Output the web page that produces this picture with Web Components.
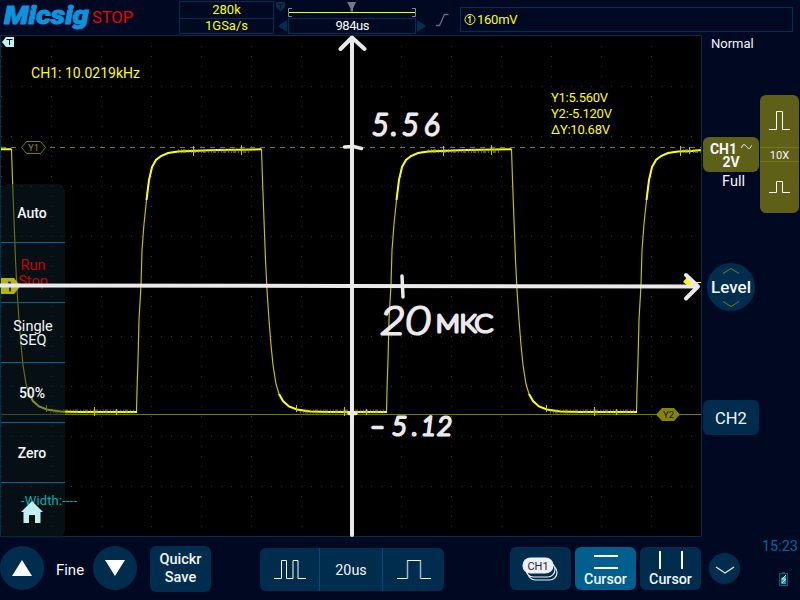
<!DOCTYPE html>
<html lang="en">
<head>
<meta charset="utf-8">
<title>Micsig oscilloscope</title>
<style>
html,body{margin:0;width:800px;height:600px;overflow:hidden;background:#000822}
body{font-family:Roboto,"Liberation Sans",sans-serif;color:#f4f7fa}
</style>
</head>
<body>
<scope-app></scope-app>
<script>
function define(name, html){
  const t=document.createElement('template'); t.innerHTML=html;
  customElements.define(name, class extends HTMLElement{
    constructor(){super();this.attachShadow({mode:'open'}).append(t.content.cloneNode(true));}
  });
}

define('scope-header', `<style>
:host{display:grid;grid-template-columns:179px 95px 184px 1fr;height:36px;box-sizing:border-box}
*{box-sizing:border-box}
.brand svg,.timeline svg{display:block}
.acq{border:1px solid #003050;margin-top:1px;height:33px;color:#ff0;font-size:13px;text-align:center;display:grid;grid-template-rows:16px 15px;line-height:16px}
.acq span+span{border-top:1px solid #003050;line-height:14px}
.trig{margin:7px 7px 0 2px;height:25px;border:1px solid #003050;color:#ff0;font-size:13px;display:flex;align-items:center;padding-left:3px;gap:1px}
.trig span{letter-spacing:-.25px}
</style>
<div class="brand"><svg width="179" height="35">
<text x="4" y="23.500" font-family="Roboto" font-weight="900" font-style="italic" font-size="25" fill="#0a93df" stroke="#0a93df" stroke-width=".9" textLength="85" lengthAdjust="spacingAndGlyphs">Micsig</text>
<text x="92" y="23" font-size="16.500" fill="#f00000" textLength="41" lengthAdjust="spacingAndGlyphs">STOP</text></svg></div>
<div class="acq"><span>280k</span><span>1GSa/s</span></div>
<div class="timeline"><svg width="184" height="35">
<path d="M2 2h9v5l-4.500 4.500L2 7z" fill="#00304f"/><path d="M4 4.500h5M6.500 4.500v4" stroke="#000822" fill="none"/>
<path d="M14.500 12.500H141" stroke="#ff0" stroke-width="1.200"/>
<path d="M18 8.500h-3.500v8H18M138 8.500h3.500v8H138" stroke="#858796" fill="none"/>
<path d="M73 2h9l-3 6.500v3h-2.500v-3z" fill="#747889"/>
<rect x="14.500" y="18.500" width="127" height="15" fill="none" stroke="#003050"/>
<path d="M13 20v12l-9-6zM143 20v12l9-6z" fill="#00304f"/>
<text x="78.500" y="30" font-size="13" fill="#fff" text-anchor="middle" textLength="34">984us</text>
<path d="M162 25.500h3.500l5-11h4" stroke="#666b7c" stroke-width="1.300" fill="none"/>
</svg></div>
<div class="trig"><svg width="12" height="14"><circle cx="6" cy="6.500" r="5" fill="none" stroke="#ff0"/><path d="M4 5l2-1.500v6.500" fill="none" stroke="#ff0" stroke-width="1.200"/></svg><span>160mV</span></div>`);

define('scope-trace', `<style>:host{display:block}svg{display:block}</style>
<svg width="702" height="502" viewBox="0 35 702 502">
<defs><pattern id="dots" x="1" y="36" width="50" height="50" patternUnits="userSpaceOnUse">
<path d="M0 0h1v1H0zM10 0h1v1h-1zM20 0h1v1h-1zM30 0h1v1h-1zM40 0h1v1h-1zM0 10h1v1H0zM0 20h1v1H0zM0 30h1v1H0zM0 40h1v1H0z" fill="#393939" shape-rendering="crispEdges"/></pattern></defs>
<rect y="35" width="702" height="502" fill="#000"/>
<rect x="1" y="37" width="700" height="499" fill="url(#dots)"/>
<path d="M0 35.500H701.500V536.500H.5V36" fill="none" stroke="#00304a"/>
<path d="M1 147.500H20M50 147.500H701" stroke="#7b7b12" stroke-dasharray="5 5"/>
<path d="M1 414.500H701" stroke="#7b7b00"/>
<g id="wave" fill="none" stroke="#e9e900"></g>
<path d="M21.500 147.500l5-6h14l5 6-5 6h-14z" fill="#000" stroke="#7b7b00"/>
<text x="33.500" y="151" font-size="9.500" fill="#8b8b18" text-anchor="middle">Y1</text>
<path d="M656 414.500l6-6.500h12l6 6.500-6 6.500h-12z" fill="#858500"/>
<text x="668.500" y="418" font-size="9.500" fill="#111" text-anchor="middle">Y2</text>
<path d="M2 42l4-5h8v10H6z" fill="#bff0f3"/><path d="M6.500 39.500h6M9.500 39.500v5.500" stroke="#000" fill="none"/>
<g fill="#ff0"><text x="31" y="78" font-size="14" textLength="109">CH1: 10.0219kHz</text>
<g font-size="13"><text x="551" y="102" textLength="57">Y1:5.560V</text><text x="551" y="118" textLength="61">Y2:-5.120V</text><text x="551" y="134" textLength="59">ΔY:10.68V</text></g></g>
</svg>`);

const fall=[[11.500,149],[12.500,180],[14,220],[15.500,260],[17,290],[19,320],[21,345],[23,365],[26,384],[29,394],[33,401],[39,406.500],[47,409.500],[60,411.500]];
const rise=[[136.500,412],[137,390],[138,360],[139,320],[141,285],[142,250],[144,224],[146.500,200],[149,180],[152,167],[156,160],[161,156],[168,153],[178,151.500],[192,151]];
/* One cycle of the square wave, repeated along the time axis. */
function drawWave(g){
  let thin='',thick='';
  for(const o of [0,250,500]){
    const f=fall.map(p=>(p[0]+o)+' '+p[1]), r=rise.map(p=>(p[0]+o)+' '+p[1]);
    thin+='M'+f.join('L')+'M'+r.join('L');
    const end=Math.min(262+o,701);
    thick+='M'+f.slice(9).join('L')+'L'+(78+o)+' 412H'+(137+o)+'M'+r.slice(7).join('L');
    thick+=end===701?'L701 150':'L'+(215+o)+' 150L'+(end-.5)+' 149.3';
  }
  const noise=[0,250,500].map(o=>'M'+(50+o)+' 411.5H'+(135+o)+(o<500?'M'+(178+o)+' 151H'+(250+o):'M680 151H701')).join('');
  const ticks=[0,250,500].map(o=>'M'+(46.5+o)+' 405v7M'+(94.5+o)+' 407v9M'+(116.5+o)+' 409v6'+(o<500?'M'+(193.5+o)+' 146v10M'+(241.5+o)+' 145v10':'')).join('');
  g.innerHTML='<path stroke="#c6c600" stroke-width="1.15" d="'+thin+'"/><path stroke="#ff0" stroke-width="2" d="M1 149.3H11.500'+thick+'"/><path stroke="#b8b800" stroke-width="4" stroke-dasharray="1 2 1 1 3 2" opacity=".5" d="'+noise+'"/><path stroke="#c8c800" d="'+ticks+'M680.500 146v10M689.500 147v7"/>';
}

define('menu-item', `<style>:host{display:flex;box-sizing:border-box;height:60px;align-items:center;justify-content:center;text-align:center;font-size:14px;line-height:14px;color:#f4f7fa;border-bottom:1px solid #00679a;font-weight:500;padding-right:2px}
:host([last]){border:0;height:56px}:host([run]){color:#c50000;line-height:16px;padding-top:2px}:host([light]){padding-top:2px}:host([run]),:host([light]){font-weight:400;font-size:14.500px;padding-right:0}</style><div><slot></slot></div>`);
define('scope-menu', `<style>:host{display:block;width:64px;height:354px;background:#091d2780;border-radius:8px;box-sizing:border-box}menu-item:first-of-type{height:59px}</style>
<menu-item>Auto</menu-item><menu-item run>Run<br>Stop</menu-item><menu-item light>Single<br>SEQ</menu-item><menu-item>50%</menu-item><menu-item>Zero</menu-item><menu-item last></menu-item>`);

define('scope-annotations', `<style>:host{display:block;pointer-events:none}svg{display:block}.hand{font-family:Lato,"DejaVu Sans",sans-serif;font-weight:100;fill:#ebe9ec;stroke:#ebe9ec;stroke-width:3.200;stroke-linejoin:round;stroke-linecap:round}</style>
<svg width="702" height="502" viewBox="0 35 702 502">
<text x="21" y="505" font-size="13" fill="#00b0b4" textLength="56">-Width:----</text>
<path d="M32 501l11 11h-2.500v11h-5.500v-8h-6v8h-5.500v-11H21z" fill="#bff0f3"/>
<path d="M1 278h13l6.500 8-6.500 8H1z" fill="#b5b510"/><path d="M8 282.500h2v9" stroke="#000" stroke-width="1.500" fill="none"/>
<path d="M683 282l5-6 4 3 2 3h7v1h-7l-3 5z" fill="#ff0"/>
<g fill="none" stroke="#ebe9ec" stroke-linecap="round" stroke-linejoin="round">
<path d="M352 38V535" stroke-width="4"/><path d="M340.500 49L352 37.500l12.500 11.500" stroke-width="4"/>
<path d="M0 285.500L350 286L697 286.500" stroke-width="4"/><path d="M686 275l12 11.500-12 12" stroke-width="4"/>
<path d="M344.500 147l9-.5 8 2M349 413.500h7M402 276l1 21" stroke-width="3.500"/></g>
<text class="hand" font-size="29" y="135" x="372 391 402 424" font-style="italic">5.56</text>
<text class="hand" y="334" font-size="37" x="380" font-style="italic" textLength="51" lengthAdjust="spacingAndGlyphs">20</text>
<text class="hand" y="332" font-size="23" x="436" textLength="57" lengthAdjust="spacingAndGlyphs">МКС</text>
<text class="hand" y="435" font-size="26" x="370 392 412 421 437" font-style="italic">–5.12</text>
</svg>`);

define('scope-screen', `<style>:host{display:block;position:relative;width:702px;height:502px}scope-menu{position:absolute;left:1px;top:149px}scope-annotations{position:absolute;left:0;top:0}</style>
<scope-trace></scope-trace><scope-menu></scope-menu><scope-annotations></scope-annotations>`);

define('scope-side', `<style>
:host{display:grid;grid-template-columns:57px 39px;column-gap:1px;font-size:14px;padding-left:0}
.left{display:flex;flex-direction:column;align-items:center}
.mode{font-size:13px;line-height:16px;margin-top:1px;height:101px;align-self:flex-start;padding-left:9px}
.ch{width:56px;height:35px;border-radius:6px;background:#5e6018;display:flex;flex-direction:column;align-items:center;justify-content:center;font-weight:700;line-height:13px;padding-top:3px;margin-left:1px;box-sizing:border-box}
.ch div{display:flex;gap:4px}.ch svg{margin-top:-1px}
.full{font-size:14.500px;line-height:18px;padding:1px 0 0 6px}
.level{margin-top:72px;width:48px;height:48px;border-radius:50%;background:#002d4e;display:flex;flex-direction:column;align-items:center;justify-content:space-between;padding:5px 0 4px;box-sizing:border-box;font-size:17px;font-weight:500;line-height:22px}
.level{margin-left:1px}.level span{margin-top:-1px}
.level svg{display:block}.ch2{margin:89px 0 0 1px;padding-top:2px;box-sizing:border-box;width:56px;height:35px;border-radius:6px;background:#002d4e;display:flex;align-items:center;justify-content:center;font-size:16.500px}
.scale{margin-top:60px;width:39px;height:118px;background:#5e6018;border-radius:6px;display:grid;grid-template-rows:52px 15px 51px;text-align:center;font-size:11px;line-height:15px}
.scale span{border:solid #747812;border-width:1px 0}.scale svg{display:block}
</style><div class="left"><div class="mode">Normal</div><div class="ch"><div>CH1<svg width="11" height="12"><path d="M.5 6C2 1 4 2.500 5.500 4.500S9 8 10.500 3.500" fill="none" stroke="#fff"/></svg></div>2V</div><div class="full">Full</div>
<div class="level"><svg width="18" height="6"><path d="M1 5.500l8-5 8 5" fill="none" stroke="#77791c"/></svg><span>Level</span><svg width="18" height="6"><path d="M1 .5l8 5 8-5" fill="none" stroke="#77791c"/></svg></div><div class="ch2">CH2</div></div>
<div class="scale"><svg width="39" height="52"><path d="M9 34.500h7.500v-18h6v18h7.500" fill="none" stroke="#fff"/></svg><span>10X</span><svg width="39" height="51"><path d="M9 30.500h7.500v-11h6v11h7.500" fill="none" stroke="#fff"/></svg></div>`);

define('scope-button', `<style>:host{display:flex;flex-direction:column;align-items:center;justify-content:center;text-align:center;background:#002d4e;border-radius:6px;width:61px;height:43px;font-size:14px;line-height:18px;box-sizing:border-box}
:host([round]){width:44px;height:44px;border-radius:50%}:host([small]){width:31px;height:31px;border-radius:50%}:host([active]){background:#005f8d}</style><slot></slot>`);
define('scope-footer', `<style>:host{display:flex;height:63px;align-items:flex-start}
svg{display:block}.fine{width:49px;text-align:center;font-size:15px;line-height:44px;margin-top:11px;padding-left:3px;box-sizing:border-box}
.nav{margin-top:9px}.quick{margin:9px 49px 0 13px;height:46px;font-weight:500;font-size:14.500px}.time{display:grid;grid-template-columns:59px 63px 62px;margin:11px 66px 0 0;width:184px;height:43px;background:#002d4e;border-radius:6px;overflow:hidden;align-items:stretch}
.time>*{display:flex;align-items:center;justify-content:center}.time>*+*{border-left:1px solid #004c78}.time{font-size:14.300px}
.time svg{margin-top:-1px}
.tool{margin:10px 4px 0 0}.cur{justify-content:flex-end;padding-bottom:2px;font-weight:500;font-size:14.300px}.cur svg{margin-bottom:0}.more{margin:16px 0 0 4px}.clock{width:60px;color:#00679a;font-size:14.500px;display:flex;flex-direction:column;align-items:flex-end;padding:1px 2px 0 0;box-sizing:border-box;line-height:18px;gap:16px}.clock svg{margin-right:10px}
</style>
<scope-button round class="nav"><svg width="22" height="18"><path d="M11 1l10 16H1z" fill="#fff"/></svg></scope-button><span class="fine">Fine</span><scope-button round class="nav"><svg width="22" height="18"><path d="M1 1h20L11 17z" fill="#fff"/></svg></scope-button>
<scope-button class="quick"><span>Quickr<br>Save</span></scope-button>
<div class="time"><div><svg width="34" height="22"><path d="M1 20.500h7.500v-18h5v18h6.500v-18h5v18H33" fill="none" stroke="#fff"/></svg></div><div>20us</div><div><svg width="36" height="22"><path d="M1 20.500h10.500M11 2.500h14M24.500 20.500H35" fill="none" stroke="#fff"/><path d="M11.500 2.500v18M24.500 2.500v18" stroke="#a5b2be" stroke-width="1.500"/></svg></div></div>
<scope-button class="tool"><svg width="38" height="26" style="margin-left:-2px"><g fill="#002d4e" stroke="#eef0f3" stroke-width="1.200"><rect x="7" y="9" width="29" height="15" rx="7.500"/><rect x="5" y="6" width="29" height="15" rx="7.500"/><rect x="2" y="2" width="30" height="15" rx="7.500" fill="#eef0f3"/></g><text x="17" y="13.500" fill="#202838" font-size="11" text-anchor="middle">CH1</text></svg></scope-button>
<scope-button active class="tool cur"><svg width="26" height="16"><path d="M1 2h24M1 14h24" stroke="#fff" stroke-width="2"/></svg>Cursor</scope-button>
<scope-button class="tool cur"><svg width="26" height="20"><path d="M2 1v18M24 1v18" stroke="#fff" stroke-width="2"/></svg>Cursor</scope-button>
<scope-button small class="more"><svg width="20" height="9" style="margin-top:4px"><path d="M1 1l9 6 9-6" fill="none" stroke="#e2e8ee" stroke-width="1.300"/></svg></scope-button>
<div class="clock">15:23<svg width="9" height="14"><path d="M3 0h3v1H3z" fill="#006080"/><rect x=".5" y="1.500" width="8" height="12" fill="#001a30" stroke="#006080"/><path d="M2 6l5-2v8H2z" fill="#16a6c5"/><path d="M7 3L3 7h4l-4 4" fill="none" stroke="#d5e5e9"/></svg></div>`);

define('scope-app', `<style>:host{display:grid;width:800px;height:600px;grid-template-rows:35px 502px 63px;background:#000822}scope-header{height:35px}main{display:grid;grid-template-columns:702px 98px}</style><scope-header></scope-header><main><scope-screen></scope-screen><scope-side></scope-side></main><scope-footer></scope-footer>`);
drawWave(document.querySelector('scope-app').shadowRoot.querySelector('scope-screen').shadowRoot.querySelector('scope-trace').shadowRoot.querySelector('#wave'));
</script>
</body>
</html>
